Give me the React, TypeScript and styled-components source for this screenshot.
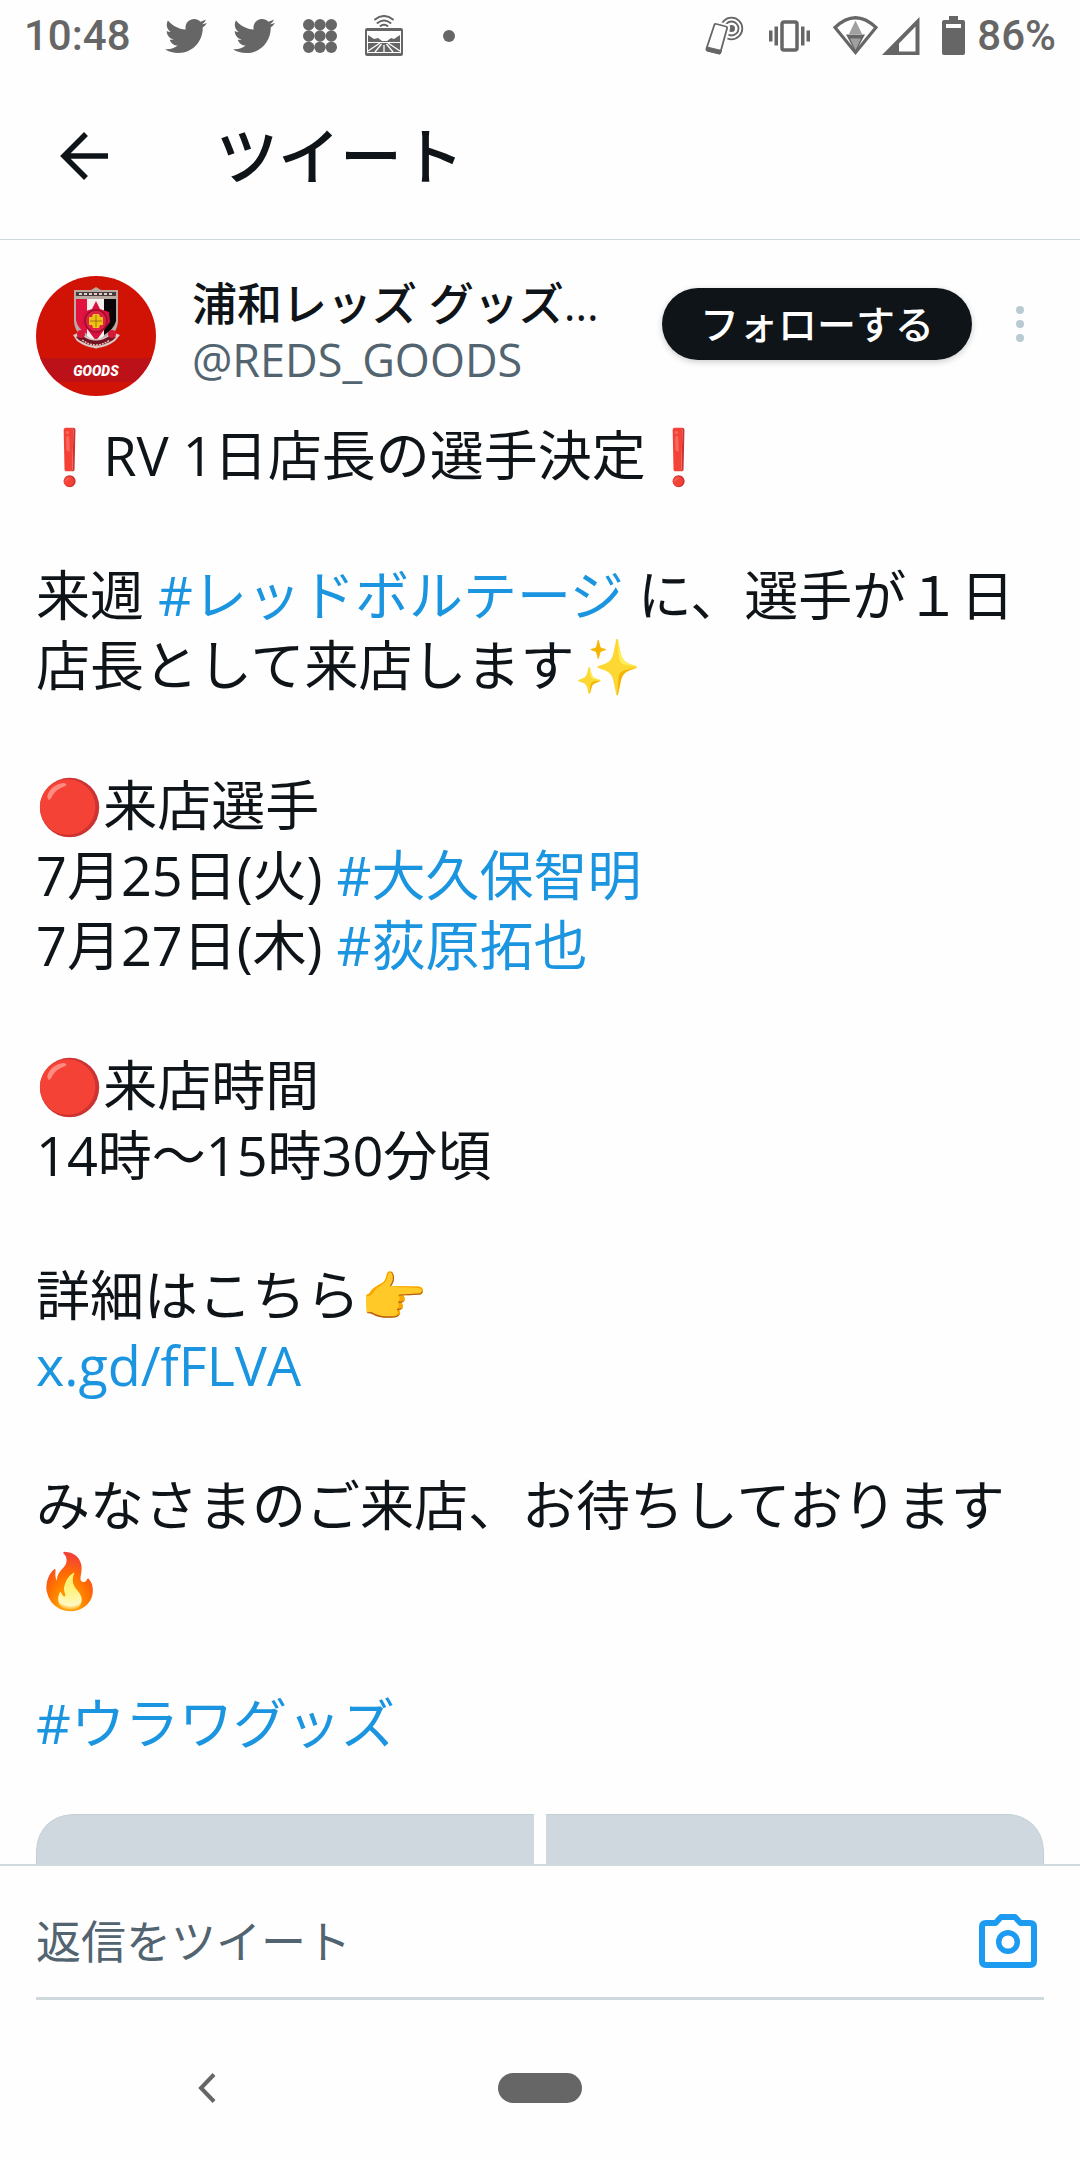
import React from "react";
import styled, { createGlobalStyle } from "styled-components";
import { FaTwitter } from "react-icons/fa";

const ink = "#0f1419";
const muted = "#536471";
const link = "#1b95e0";
const line = "#cfd9de";
const system = "#666666";

const GlobalStyle = createGlobalStyle`
  *, *::before, *::after { box-sizing: border-box; }
  body {
    margin: 0;
    background: #fefefe;
    color: ${ink};
    font-family: "Open Sans", "Noto Sans CJK JP", "Noto Color Emoji", sans-serif;
  }
  button, input { font: inherit; color: inherit; }
`;

const Screen = styled.div`
  display: flex;
  flex-direction: column;
  height: 100vh;
`;

const StatusBar = styled.div`
  display: flex;
  justify-content: space-between;
  flex: none;
  height: 72px;
  padding: 0 24px;
  color: ${system};
  font-family: Roboto, sans-serif;
  font-size: 42px;
  font-weight: 500;
  line-height: 74px;
  svg { flex: none; display: block; }
`;

const StatusGroup = styled.div<{ $gap: number }>`
  display: flex;
  align-items: center;
  gap: ${(p) => p.$gap}px;
`;

const Clock = styled.span`
  padding-right: 8px;
`;

const Signals = styled.span`
  display: flex;
  gap: 4px;
`;

const Battery = styled.span`
  display: flex;
  align-items: center;
  gap: 12px;
`;

const Header = styled.header`
  display: flex;
  align-items: center;
  flex: none;
  gap: 72px;
  height: 168px;
  padding: 0 36px;
  border-bottom: 1px solid ${line};
`;

const IconButton = styled.button`
  display: grid;
  place-items: center;
  flex: none;
  padding: 0;
  border: 0;
  background: none;
  svg { display: block; }
`;

const BackButton = styled(IconButton)`
  width: 96px;
  height: 96px;
`;

const Title = styled.h1`
  margin: 0 0 0 12px;
  font-size: 62px;
  font-weight: 500;
  line-height: 84px;
`;

const Main = styled.main`
  flex: 1;
  min-height: 0;
  padding: 36px 36px 0;
  overflow-y: auto;
  scrollbar-width: none;
`;

const Author = styled.div`
  display: flex;
  align-items: flex-start;
`;

const Avatar = styled.svg`
  flex: none;
  display: block;
  width: 120px;
  height: 120px;
  border-radius: 50%;
`;

const Names = styled.div`
  flex: 1;
  min-width: 0;
  padding-left: 36px;
  font-size: 45px;
  line-height: 56px;
  white-space: nowrap;
`;

const Name = styled.div`
  font-weight: 500;
`;

const Handle = styled.div`
  color: ${muted};
`;

const FollowButton = styled.button`
  flex: none;
  height: 72px;
  margin-top: 12px;
  padding: 0 38px;
  border: 0;
  border-radius: 36px;
  background: ${ink};
  box-shadow: 0 2px 6px rgba(0, 0, 0, 0.2);
  color: #fff;
  font-size: 39px;
  font-weight: 500;
  line-height: 72px;
`;

const MoreButton = styled(IconButton)`
  width: 48px;
  height: 72px;
  margin: 12px 0 0 24px;
`;

const TweetText = styled.p`
  margin: 24px 0 56px;
  font-size: 54px;
  line-height: 70px;
  white-space: pre-line;
`;

const Link = styled.a`
  color: ${link};
  text-decoration: none;
`;

const TallEmoji = styled.span`
  line-height: 78px;
`;

const Media = styled.div`
  display: grid;
  grid-template-columns: 1fr 1fr;
  gap: 12px;
  height: 567px;
  border-radius: 36px;
  overflow: hidden;
`;

const Photo = styled.div<{ $side: "left" | "right" }>`
  border: 1px solid #c4cfd5;
  border-${(p) => (p.$side === "left" ? "right" : "left")}: 0;
  border-radius: ${(p) => (p.$side === "left" ? "36px 0 0 36px" : "0 36px 36px 0")};
  background: #cfd8df;
`;

const ReplyBar = styled.form`
  flex: none;
  padding: 0 36px 16px;
  border-top: 2px solid ${line};
`;

const ReplyField = styled.div`
  display: flex;
  align-items: center;
  height: 134px;
  padding-top: 18px;
  border-bottom: 3px solid ${line};
`;

const ReplyInput = styled.input`
  flex: 1;
  min-width: 0;
  height: 100%;
  padding: 2px 0 0;
  border: 0;
  outline: 0;
  background: none;
  font-size: 45px;
  &::placeholder { color: ${muted}; opacity: 1; }
`;

const CameraButton = styled(IconButton)`
  width: 72px;
  height: 72px;
  color: #1d9bf0;
`;

const NavBar = styled.nav`
  display: grid;
  grid-template-columns: 1fr 84px 1fr;
  align-items: center;
  flex: none;
  height: 144px;
  color: ${system};
`;

const NavBack = styled(IconButton)`
  justify-self: center;
  width: 84px;
  height: 84px;
  margin-right: 84px;
`;

const NavHome = styled.button`
  height: 30px;
  padding: 0;
  border: 0;
  border-radius: 15px;
  background: ${system};
`;

const GridIcon = () => (
  <svg width="38" height="34" viewBox="-2 0 38 34" fill="currentColor" aria-hidden="true">
    {[5.7, 17, 28.3].map((y) =>
      [5.7, 17, 28.3].map((x) => <circle key={`${x}-${y}`} cx={x} cy={y} r="5.7" />)
    )}
  </svg>
);

const RoadIcon = () => (
  <svg width="38" height="42" viewBox="0 0 38 42" aria-hidden="true">
    <g fill="none" stroke="currentColor" strokeWidth="2" strokeLinecap="round">
      <path d="M10 4.5Q19 -2.5 28 4.5M12.5 8Q19 3 25.500 8M15.500 11Q19 8.500 22.500 11" />
    </g>
    <path fill="currentColor" fillRule="evenodd" d="M2 13H36Q38 13 38 15V39Q38 41 36 41H2Q0 41 0 39V15Q0 13 2 13ZM2 16V38H36V16Z" />
    <path fill="currentColor" d="M3 20L9 24L13 23L17 26H22L26 23L29 24L35 20V27H3ZM3 28H35V37H3Z" />
    <path d="M15 28L3 36M23 28L35 36M16.500 29L10 37M21.500 29L28 37M19 30V37" fill="none" stroke="#fefefe" strokeWidth="1.300" />
  </svg>
);

const TapPhoneIcon = () => (
  <svg width="42" height="40" viewBox="0 0 42 40" fill="none" stroke="currentColor" aria-hidden="true">
    <g strokeWidth="1.800">
      <circle cx="26.500" cy="12.500" r="10.800" />
      <circle cx="26.500" cy="12.500" r="7" />
    </g>
    <circle cx="26.500" cy="12.500" r="3.500" fill="currentColor" stroke="none" />
    <path d="M10 8Q10.500 7 12 7.500L21.500 10.500Q23 11 22.500 12.500L16 36.500Q15.500 38.500 14 38L2.500 34.500Q.8 34 1.500 32.500Z" fill="#fefefe" stroke="#fefefe" strokeWidth="5" />
    <path d="M9.500 8.500Q10 7.500 11.500 8L21 10.500Q22.500 11 22 12.500L15.500 36Q15 38 13.500 37.500L2.500 34.500Q1 34 1.500 32.500Z" fill="#fefefe" strokeWidth="1.800" />
    <path d="M2 31L16.500 34.500L15 38L2 35Z" fill="currentColor" />
  </svg>
);

const VibrateIcon = () => (
  <svg width="42" height="32" viewBox="0 0 42 32" aria-hidden="true">
    <rect x="13" y="2" width="15" height="28" rx="2" fill="none" stroke="currentColor" strokeWidth="3.500" />
    <path fill="currentColor" d="M0 10.500H3.500V21.500H0ZM5.500 6.500H9V25.500H5.500ZM32 6.500H35.500V25.500H32ZM37.500 10.500H41V21.500H37.500Z" />
  </svg>
);

const WifiIcon = () => (
  <svg width="45" height="40" viewBox="0 0 45 40" aria-hidden="true">
    <path d="M2 11.500Q22.500 -8 43 11.500L22.500 36.500Z" fill="none" stroke="currentColor" strokeWidth="3.200" />
    <path d="M13 18.500H32L22.500 36Z" fill="currentColor" />
    <path d="M22.500 4.500L29 18H16ZM17 22.500H28L22.500 34Z" fill="#a0a0a0" />
  </svg>
);

const CellIcon = () => (
  <svg width="38" height="40" viewBox="0 0 38 40" aria-hidden="true">
    <path fill="currentColor" fillRule="evenodd" d="M37.500 1V39H0ZM33.500 10.500L17 27.500V35.500H33.500Z" />
  </svg>
);

const BatteryIcon = () => (
  <svg width="23" height="40" viewBox="0 0 23 40" aria-hidden="true">
    <path fill="currentColor" fillRule="evenodd" d="M7 0H16V4H21Q23 4 23 6V37Q23 39 21 39H2Q0 39 0 37V6Q0 4 2 4H7ZM4 8V12H19V8Z" />
  </svg>
);

const BackArrow = () => (
  <svg width="48" height="48" viewBox="0 0 48 48" fill="none" stroke="currentColor" strokeWidth="5.500" aria-hidden="true">
    <path d="M26 2L4 24L26 46M3 24H48" />
  </svg>
);

const MoreIcon = () => (
  <svg width="8" height="36" viewBox="0 0 8 36" fill="#b9cad3" aria-hidden="true">
    <circle cx="4" cy="4" r="4" />
    <circle cx="4" cy="18" r="4" />
    <circle cx="4" cy="32" r="4" />
  </svg>
);

const CameraIcon = () => (
  <svg width="58" height="54" viewBox="0 0 58 54" fill="none" stroke="currentColor" aria-hidden="true">
    <path strokeWidth="6" strokeLinejoin="round" d="M7 9H16.500L22 3H36L41.500 9H51Q55 9 55 13V47Q55 51 51 51H7Q3 51 3 47V13Q3 9 7 9Z" />
    <circle cx="29" cy="28" r="9.300" strokeWidth="5.500" />
  </svg>
);

const NavChevron = () => (
  <svg width="18" height="30" viewBox="0 0 18 30" fill="none" stroke="currentColor" strokeWidth="4" aria-hidden="true">
    <path d="M16 1.500L3 15L16 28.500" />
  </svg>
);

const ClubAvatar = () => (
  <Avatar viewBox="0 0 120 120" role="img" aria-label="浦和レッズ グッズ">
    <rect width="120" height="120" fill="#d11306" />
    <rect y="82" width="120" height="24" fill="#bd111a" />
    <path d="M38 14L55 14L60 11L65 14H82V46Q81 60 60 73Q39 60 38 46Z" fill="#b9aaa4" />
    <path d="M40 23H51V58Q41 52 40 44Z" fill="#e2143f" />
    <path d="M51 23H68V60L60 66L51 60Z" fill="#f5f0ee" />
    <path d="M68 23H80V45Q78 53 68 59Z" fill="#0b0709" />
    <path d="M40 16H80V20H40Z" fill="#4b3c3b" />
    <path d="M43 18H77" stroke="#d8d2cc" strokeWidth="2" strokeDasharray="3 2" />
    <path d="M60 25L64 33L73 36L74 46L68 54L60 65L52 54L46 46L47 36L56 33Z" fill="#d8123e" />
    <circle cx="60" cy="45" r="11" fill="#df2148" stroke="#9e0d2b" strokeWidth="1.500" />
    <path d="M57 38H63L64 41H67V49H64L63 52H57L56 49H53V41H56Z" fill="#efc313" />
    <path d="M54 45H66M60 39V51" stroke="#a56d10" strokeWidth="1" />
    <path d="M37 59L44 56Q60 70 76 56L84 59L79 65Q60 79 41 65Z" fill="#d9c9c5" />
    <path d="M40 61L45 59Q60 70 75 59L80 61L77 64Q60 75 43 64Z" fill="#731220" />
    <circle cx="45" cy="58" r="4" fill="#d3183b" />
    <circle cx="76" cy="58" r="4" fill="#d3183b" />
    <path d="M46 64Q60 74 74 64" fill="none" stroke="#e4b9b2" strokeWidth="1.500" strokeDasharray="2 1" />
    <text x="60" y="100" textAnchor="middle" fill="#fff" fontFamily="Roboto, sans-serif" fontSize="14" fontWeight="900" fontStyle="italic">
      GOODS
    </text>
  </Avatar>
);

const Tag = ({ children }: { children: string }) => <Link href="#">{children}</Link>;

export default function App() {
  return (
    <Screen>
      <GlobalStyle />
      <StatusBar>
        <StatusGroup $gap={26}>
          <Clock>10:48</Clock>
          <FaTwitter size={42} aria-hidden="true" />
          <FaTwitter size={42} aria-hidden="true" />
          <GridIcon />
          <RoadIcon />
          <svg width="48" height="12" viewBox="0 0 48 12" aria-hidden="true">
            <circle cx="20" cy="6" r="6" fill="currentColor" />
          </svg>
        </StatusGroup>
        <StatusGroup $gap={22}>
          <TapPhoneIcon />
          <VibrateIcon />
          <Signals>
            <WifiIcon />
            <CellIcon />
          </Signals>
          <Battery>
            <BatteryIcon />
            86%
          </Battery>
        </StatusGroup>
      </StatusBar>

      <Header>
        <BackButton type="button" aria-label="戻る">
          <BackArrow />
        </BackButton>
        <Title>ツイート</Title>
      </Header>

      <Main>
        <Author>
          <ClubAvatar />
          <Names>
            <Name>浦和レッズ グッズ…</Name>
            <Handle>@REDS_GOODS</Handle>
          </Names>
          <FollowButton type="button">フォローする</FollowButton>
          <MoreButton type="button" aria-label="その他">
            <MoreIcon />
          </MoreButton>
        </Author>

        <TweetText>
          {"❗RV 1日店長の選手決定❗\n\n来週 "}
          <Tag>#レッドボルテージ</Tag>
          {" に、選手が１日店長として来店します✨\n\n🔴来店選手\n7月25日(火) "}
          <Tag>#大久保智明</Tag>
          {"\n7月27日(木) "}
          <Tag>#荻原拓也</Tag>
          {"\n\n🔴来店時間\n14時〜15時30分頃\n\n詳細はこちら👉\n"}
          <Tag>x.gd/fFLVA</Tag>
          {"\n\nみなさまのご来店、お待ちしております"}
          <TallEmoji>🔥</TallEmoji>
          {"\n\n"}
          <Tag>#ウラワグッズ</Tag>
        </TweetText>

        <Media>
          <Photo $side="left" />
          <Photo $side="right" />
        </Media>
      </Main>

      <ReplyBar>
        <ReplyField>
          <ReplyInput type="text" placeholder="返信をツイート" aria-label="返信をツイート" />
          <CameraButton type="button" aria-label="写真を追加">
            <CameraIcon />
          </CameraButton>
        </ReplyField>
      </ReplyBar>

      <NavBar>
        <NavBack type="button" aria-label="戻る">
          <NavChevron />
        </NavBack>
        <NavHome type="button" aria-label="ホーム" />
      </NavBar>
    </Screen>
  );
}
